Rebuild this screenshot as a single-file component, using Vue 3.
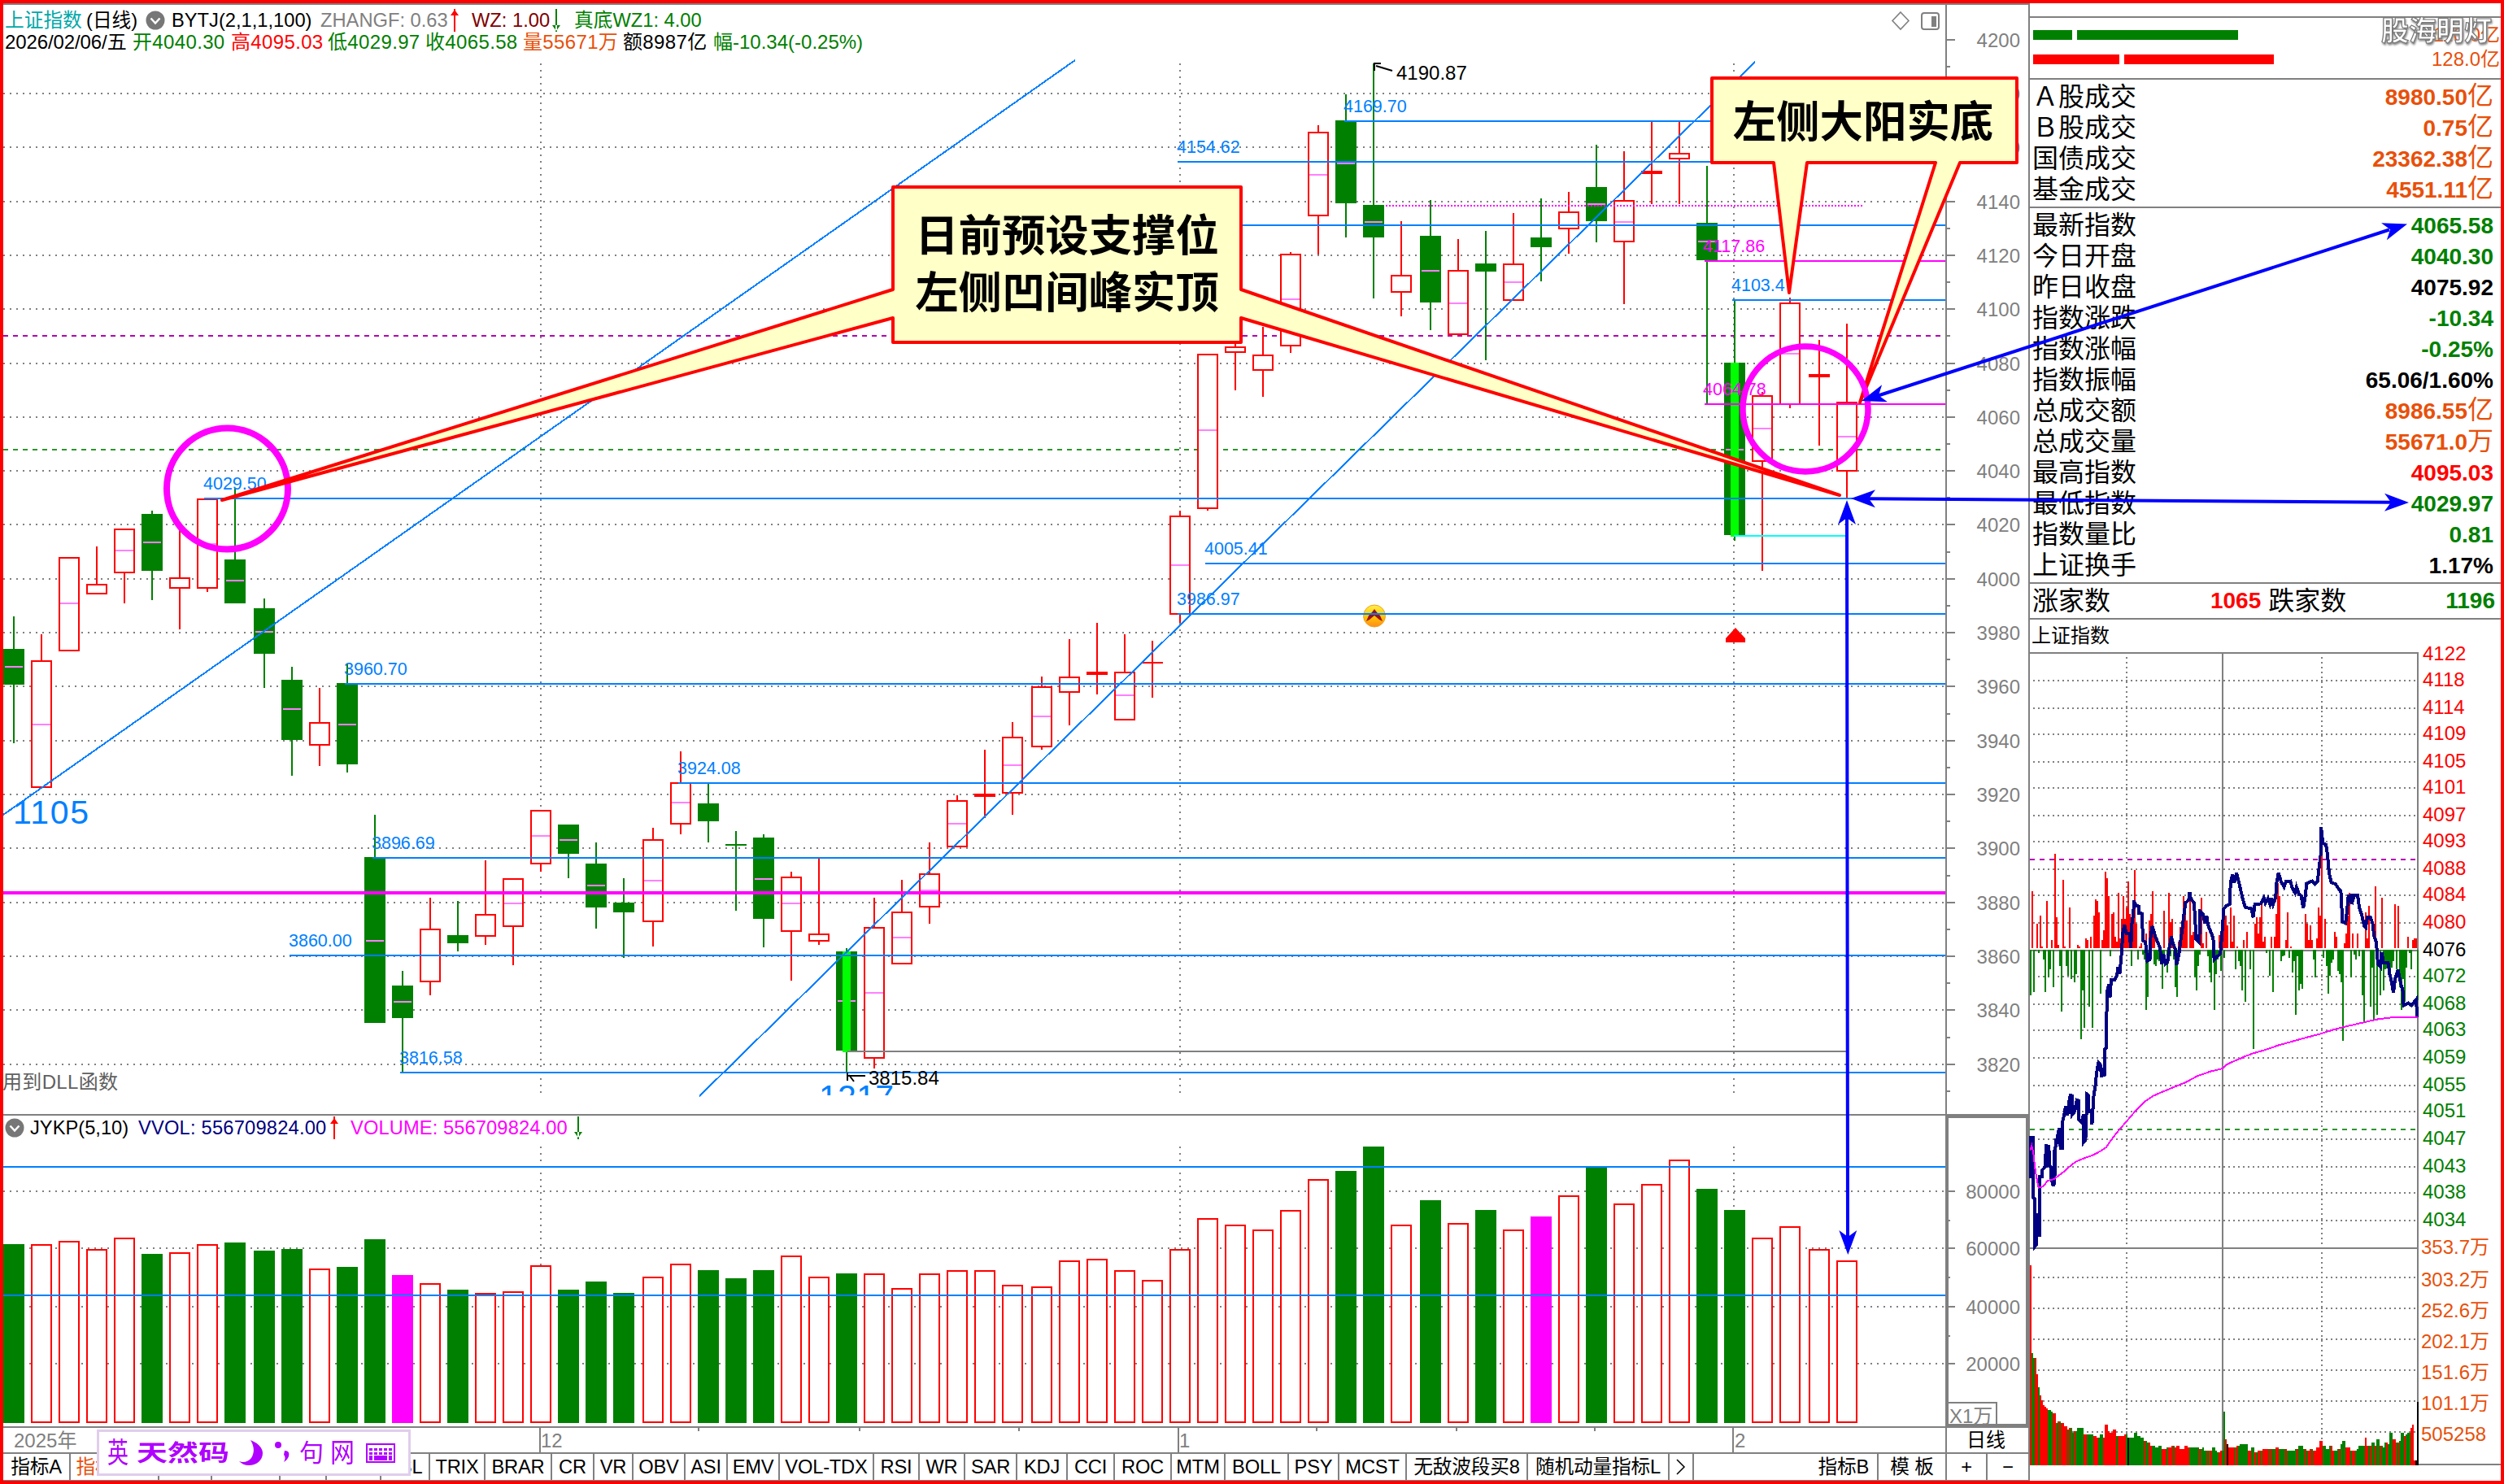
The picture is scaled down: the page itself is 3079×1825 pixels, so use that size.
<script setup>
// x centre of the i-th trading day
const cx = (i) => 17 + 34 * i + 2 * Math.floor((i + 5) / 14)

// [kind, high, bodyTop, bodyBottom, low, midpoint]
const candles = [
  ['g', 758, 798, 842, 914, 820], ['r', 780, 812, 969, 969, 891], ['r', 685, 685, 801, 801, 742],
  ['r', 672, 718, 731, 731], ['r', 650, 650, 705, 742, 677], ['g', 628, 632, 702, 738, 667],
  ['r', 645, 710, 724, 774], ['r', 613, 613, 724, 728, 669], ['g', 600, 688, 742, 742, 714],
  ['g', 736, 748, 804, 846, 777], ['g', 820, 836, 910, 954, 872], ['r', 846, 888, 917, 942],
  ['g', 816, 840, 940, 950, 891], ['g', 1002, 1054, 1258, 1258, 1157], ['g', 1194, 1212, 1252, 1319, 1232],
  ['r', 1104, 1142, 1208, 1224], ['g', 1108, 1150, 1160, 1170], ['r', 1058, 1124, 1152, 1162],
  ['r', 1080, 1080, 1140, 1187, 1111], ['r', 996, 996, 1063, 1072, 1028], ['g', 1014, 1014, 1050, 1080, 1033],
  ['g', 1036, 1062, 1116, 1142, 1089], ['g', 1080, 1110, 1122, 1178], ['r', 1018, 1032, 1134, 1164, 1083],
  ['r', 924, 962, 1014, 1026, 987], ['g', 963, 988, 1010, 1036], ['g', 1022, 1038, 1040, 1120],
  ['g', 1026, 1030, 1130, 1165, 1081], ['r', 1072, 1078, 1146, 1206, 1111], ['r', 1056, 1148, 1158, 1162],
  ['b', 1166, 1170, 1292, 1319, 1231], ['r', 1104, 1140, 1302, 1314, 1221], ['r', 1082, 1121, 1186, 1186, 1153],
  ['r', 1036, 1074, 1116, 1136, 1095], ['r', 978, 984, 1042, 1042, 1013], ['r', 922, 976, 980, 1006],
  ['r', 888, 906, 976, 1002, 941], ['r', 832, 844, 919, 922, 881], ['r', 786, 832, 852, 892],
  ['r', 766, 826, 830, 854], ['r', 780, 826, 886, 886, 855], ['r', 788, 814, 816, 858],
  ['r', 628, 634, 756, 766, 695], ['r', 435, 435, 626, 628, 529], ['r', 400, 426, 434, 480],
  ['r', 402, 436, 456, 488], ['r', 310, 312, 426, 434, 368], ['r', 154, 162, 266, 313, 215],
  ['g', 116, 148, 250, 292, 201], ['g', 78, 252, 292, 367, 273], ['r', 272, 338, 360, 389],
  ['g', 246, 290, 372, 406, 333], ['r', 294, 332, 412, 412, 373], ['g', 284, 324, 334, 443],
  ['r', 262, 324, 370, 370, 347], ['g', 244, 292, 304, 346], ['r', 236, 260, 282, 312],
  ['g', 178, 230, 272, 298, 251], ['r', 186, 246, 298, 374, 273], ['r', 150, 210, 214, 251],
  ['r', 150, 188, 196, 251], ['g', 204, 274, 320, 496, 297], ['b', 368, 446, 658, 665, 553],
  ['r', 482, 486, 568, 702, 527], ['r', 366, 372, 498, 502, 435], ['r', 418, 460, 464, 548],
  ['r', 398, 494, 580, 612, 537]
].map(([kind, high, top, bottom, low, mid], i) => ({ kind, high, top, bottom, low, mid, x: cx(i) }))

const volumes = (
  'g510 r510 r498 r528 r486 g546 r540 r510 g504 g534 g528 r600 g594 g492 m624 r654 g678 r690 r684 r588 ' +
  'g678 g648 g690 r630 r582 g606 g636 g606 r552 r630 g618 r618 r672 r618 r606 r606 r660 r666 r570 r564 ' +
  'r606 r642 r528 r414 r438 r456 r384 r270 g240 g150 r438 g348 r432 g384 r456 m408 r330 g228 r360 r288 ' +
  'r198 g306 g384 r486 r444 r528 r570'
).split(' ').map((s, i) => ({ kind: s[0], top: 1360 + Number(s.slice(1)) / 3, x: cx(i) }))
const kindColor = { g: '#008000', m: '#f0f' }

const priceY = (p) => Math.round(48.6 + (4200 - p) * 3.316)
const priceTicks = Array.from({ length: 20 }, (_, i) => 4200 - i * 20)
const gridTicks = priceTicks.filter((p) => p < 4190)
const volTicks = [[80000, 1465], [60000, 1535], [40000, 1607], [20000, 1677]]
const monthX = [665, 1451, 2132]

// [y, x start, label]
const levels = [
  [149, 1653, '4169.70'], [199, 1448, '4154.62'], [277, 1484, ''], [369, 2130, '4103.4'],
  [613, 251, '4029.50'], [693, 1482, '4005.41'], [755, 1448, '3986.97'], [841, 424, '3960.70'],
  [963, 834, '3924.08'], [1055, 458, '3896.69'], [1175, 356, '3860.00'], [1319, 492, '3816.58']
]

const row1 = [
  ['上证指数', '#00a8a8'], ['(日线)', '#000'], ['@', ''], ['BYTJ(2,1,1,100)', '#000'], ['ZHANGF: 0.63', '#808080'],
  ['↑', ''], ['WZ: 1.00', '#800000'], ['↓', ''], ['真底WZ1: 4.00', '#008000']
]
const row2 = [
  ['2026/02/06/五', '#000'], ['开4040.30', '#008000'], ['高4095.03', '#f00'], ['低4029.97', '#008000'],
  ['收4065.58', '#008000'], ['量55671万', '#e8500a'], ['额8987亿', '#000'], ['幅-10.34(-0.25%)', '#008000']
]

const tabs = [
  ['指标A', 83], ['指标管理', 109, 'hot'], ['窗口', 65], ['MACD', 84], ['DMI', 57], ['DMA', 67], ['FSL', 60],
  ['TRIX', 68], ['BRAR', 82], ['CR', 52], ['VR', 48], ['OBV', 64], ['ASI', 52], ['EMV', 64], ['VOL-TDX', 116],
  ['RSI', 56], ['WR', 56], ['SAR', 64], ['KDJ', 62], ['CCI', 58], ['ROC', 70], ['MTM', 66], ['BOLL', 78],
  ['PSY', 62], ['MCST', 83], ['无敌波段买8', 149], ['随机动量指标L', 174]
]

const turnover = [['Ａ股成交', '8980.50'], ['Ｂ股成交', '0.75'], ['国债成交', '23362.38'], ['基金成交', '4551.11']]
const quotes = [
  ['最新指数', '4065.58', '', 'green'], ['今日开盘', '4040.30', '', 'green'], ['昨日收盘', '4075.92', '', ''],
  ['指数涨跌', '-10.34', '', 'green'], ['指数涨幅', '-0.25%', '', 'green'], ['指数振幅', '65.06/1.60%', '', ''],
  ['总成交额', '8986.55', '亿', 'orange'], ['总成交量', '55671.0', '万', 'orange'], ['最高指数', '4095.03', '', 'red'],
  ['最低指数', '4029.97', '', 'green'], ['指数量比', '0.81', '', 'green'], ['上证换手', '1.17%', '', '']
]

// Intraday chart
const mx = (x) => 2480 + x / 2.6177
const my = (y) => 780 + y / 2.8
const vy = (y) => 1300 + y / 2.9867
const pairs = (s) => s.trim().split(/\s+/).map((p) => p.split(',').map(Number))

const morning = pairs(`45,290 45,445 52,290 52,515 57,520 57,697 63,690 65,575 67,655 74,655 74,440 82,440 82,415 90,405 95,320
 95,405 103,322 105,400 111,405 111,445 117,475 121,340 121,470 125,300 125,330 136,260 136,300 141,335 146,335 146,240 152,215 157,180
 157,210 163,210 168,165 173,135 173,210 179,138 179,210 186,200 193,158 198,160 198,228 208,240 215,210 215,313 221,305 224,205
 224,135 230,140 232,200 240,195 242,247 247,145 252,110 257,55 263,20 268,25 273,73 278,40 283,70 283,0`)
const session = pairs(`283,1430 288,1425 290,1230 297,1205 301,1250 303,1190 315,1190 322,1175 326,1145 331,1170 336,1110 341,1030
 346,1000 352,1030 362,1030 367,1080 370,1000 375,960 377,917 383,935 393,937 393,960 404,962 405,1055 414,1060 420,1125 428,1120
 430,1050 435,1005 440,1020 447,1045 455,1065 461,1080 466,1135 472,1100 478,1135 485,1130 490,1085 497,1040 503,1065 510,1085
 514,1138 522,1100 528,1050 533,1010 538,965 543,925 553,915 556,888 560,910 570,925 573,965 577,1050 587,1060 590,955 600,965
 605,995 611,970 615,1000 624,1025 632,1045 635,1120 645,1110 655,1100 660,1040 666,945 675,935 685,930 688,855 694,828 700,855
 707,822 715,855 720,880 728,915 735,940 755,945 761,975 766,930 785,928 795,908 800,925 808,910 815,930 820,908 825,930 833,905
 836,855 842,822 850,850 860,870 866,852 880,850 887,875 895,890 900,870 908,895 915,900 922,943 928,905 933,858 950,850 960,860
 968,850 972,810 978,760 979,664 985,720 995,725 1000,760 1005,820 1012,855 1025,860 1035,875 1043,885 1048,990 1058,995 1062,960
 1067,902 1075,900 1078,930 1085,900 1097,900 1102,940 1110,965 1118,1005 1123,1010 1128,975 1138,975 1145,995 1150,1040 1157,1060
 1162,1135 1170,1145 1174,1095 1180,1130 1195,1130 1200,1170 1205,1190 1212,1235 1218,1185 1227,1155 1235,1200 1243,1230 1245,1278
 1260,1270 1270,1278 1285,1258 1289,1320`)
const toLine = (a, fy) => a.map(([x, y]) => `${mx(x).toFixed(1)},${fy(y).toFixed(1)}`).join(' ')
const priceLine = toLine(morning, vy) + ' ' + toLine(session, my)

const avgA = pairs(`43,342 48,325 53,350 58,405 64,445 70,480 85,475 98,455 120,448 135,435 155,418 170,402 190,384 215,372 245,360
 270,345 287,332 300,310 320,280 350,240 380,200 410,165 440,142 470,127 510,108 545,92 580,70 625,52 662,42 675,28 700,14 725,3`)
const avgB = pairs(`725,1457 760,1443 800,1431 840,1416 880,1404 930,1389 980,1375 1020,1361 1070,1348 1130,1333 1165,1325 1210,1319 1290,1318`)
const avgLine = toLine(avgA, vy) + ' ' + toLine(avgB, my)

const buys = pairs(`49,885 65,997 75,968 80,1075 96,918 112,1053 123,756 128,974 133,1070 149,846 154,1075 170,941 196,1070 201,1075
 222,1047 227,1053 238,1042 248,970 253,913 259,918 264,958 274,1053 280,1019 285,818 290,840 295,902 306,964 311,958 316,1042
 322,1058 327,890 332,1047 337,980 343,902 348,980 353,941 358,851 363,964 369,1019 374,986 379,812 384,997 395,1075 400,1064
 416,1030 426,986 432,964 437,885 442,1040 474,952 490,890 495,992 500,980 521,1058 526,1008 531,986 536,902 542,918 547,986
 558,918 563,1036 568,1025 594,907 599,1064 610,1025 652,1036 657,1036 663,952 668,950 673,970 678,1002 688,941 694,1058 699,969
 710,1075 731,1053 741,1025 767,997 772,974 777,1030 783,974 788,918 793,1058 798,1042 819,1042 830,1042 835,964 840,857 845,902
 866,1053 871,958 882,1075 929,964 934,997 939,1053 945,1002 950,1053 966,1047 971,941 976,969 981,762 992,980 1023,1025 1028,1042
 1054,1064 1060,1030 1065,969 1070,890 1080,1030 1096,1030 1123,958 1128,1047 1133,935 1154,868 1175,907 1217,930 1227,935
 1258,1042 1274,1053 1280,1047 1285,1047`)
const sells = pairs(`44,1243 54,1232 60,1090 70,1098 86,1120 91,1232 102,1182 107,1154 117,1215 138,1143 144,1299 159,1143 165,1176
 175,1187 185,1198 191,1170 206,1394 212,1226 217,1355 233,1282 243,1355 269,1238 301,1109 369,1142 390,1120 405,1103 411,1120
 416,1294 421,1249 426,1110 432,1115 442,1137 447,1142 453,1120 458,1125 463,1130 468,1221 474,1110 484,1165 495,1109 505,1120
 510,1215 516,1249 573,1182 578,1226 584,1143 589,1103 615,1109 620,1165 625,1198 636,1294 641,1170 646,1120 657,1159 668,1114 704,1154
 715,1126 720,1143 725,1226 736,1266 751,1154 761,1428 803,1098 814,1176 824,1232 850,1126 856,1109 861,1107 876,1114 887,1165
 892,1126 897,1310 903,1110 908,1226 913,1204 918,1221 955,1120 960,1182 986,1114 997,1143 1002,1238 1007,1176 1012,1132
 1018,1120 1033,1159 1039,1170 1044,1198 1049,1400 1075,1182 1086,1103 1091,1120 1102,1109 1112,1243 1117,1333 1138,1282
 1143,1148 1149,1327 1159,1310 1170,1243 1180,1226 1185,1154 1191,1150 1196,1160 1201,1187 1206,1148 1212,1126 1222,1154
 1232,1215 1238,1294 1243,1187 1248,1265 1253,1148 1264,1098 1269,1154 1290,1260`)

const volShape = pairs(`44,765 49,1087 54,1105 59,1105 64,1165 70,1213 75,1242 80,1260 85,1278 91,1284 96,1290 104,1296 112,1302
 120,1308 128,1344 136,1338 146,1344 156,1356 165,1368 172,1362 180,1380 190,1374 200,1362 211,1362 218,1386 242,1386 250,1392
 264,1398 271,1386 278,1398 287,1350 294,1374 302,1380 313,1368 320,1392 335,1392 350,1386 358,1398 370,1398 380,1380 390,1392
 405,1398 410,1410 425,1416 435,1428 450,1434 460,1428 475,1440 490,1434 500,1428 510,1434 520,1428 530,1440 543,1428 555,1434
 580,1434 590,1440 598,1434 605,1446 625,1446 633,1434 640,1446 650,1452 659,1446 665,1302 670,1404 676,1422 682,1434 700,1434
 710,1428 720,1422 738,1422 745,1446 760,1434 770,1452 780,1446 800,1440 830,1440 837,1434 850,1440 890,1446 900,1440 915,1428
 925,1440 940,1446 948,1440 955,1446 968,1434 973,1434 979,1410 985,1428 1000,1440 1010,1428 1020,1446 1040,1440 1046,1422
 1052,1410 1058,1434 1068,1434 1075,1446 1088,1446 1095,1440 1103,1428 1115,1428 1120,1398 1126,1428 1140,1428 1146,1416
 1155,1428 1162,1404 1170,1428 1180,1434 1190,1416 1198,1422 1203,1380 1210,1404 1218,1404 1225,1416 1233,1410 1240,1380
 1248,1392 1256,1386 1261,1380 1267,1362 1272,1350 1278,1482 1283,1482 1288,1266`)
const greenRuns = pairs(`50,57 66,71 98,114 125,129 135,140 162,166 175,182 190,214 224,245 260,265 270,275 320,325 352,356 362,375
 377,390 395,408 412,420 434,466 482,488 503,507 554,585 590,604 606,612 620,624 628,640 645,650 661,669 700,705 710,742 752,763
 768,775 785,790 812,816 822,830 845,850 853,863 868,893 896,900 907,925 933,938 950,954 985,1010 1020,1033 1045,1058 1072,1076
 1090,1120 1132,1137 1143,1150 1158,1167 1174,1185 1194,1209 1222,1226 1230,1246 1254,1268`)
const minuteBars = Array.from({ length: 239 }, (_, i) => {
  const x = 44 + i * 5.236
  let best = volShape[0]
  for (const p of volShape) if (Math.abs(p[0] - x) < Math.abs(best[0] - x)) best = p
  const black = Math.abs(x - 358) < 2.6 || Math.abs(x - 678) < 2.6 || x > 1284
  const green = greenRuns.some(([a, b]) => x >= a - 1 && x <= b + 1)
  return { x: 2496 + i * 2, top: Math.round(vy(best[1])), fill: black ? '#000' : green ? '#008000' : '#f00' }
})

const miniGrid = [837, 871, 903, 937, 969, 1003, 1035, 1069, 1101, 1135, 1201, 1235, 1267, 1301, 1335, 1367, 1401, 1435, 1467, 1501,
  1571, 1609, 1647, 1685, 1723, 1761]
const miniLabels = [
  [4122, 803], [4118, 835], [4114, 869], [4109, 901], [4105, 935], [4101, 967], [4097, 1001], [4093, 1033], [4088, 1067],
  [4084, 1099], [4080, 1133], [4076, 1167], [4072, 1199], [4068, 1233], [4063, 1265], [4059, 1299], [4055, 1333], [4051, 1365],
  [4047, 1399], [4043, 1433], [4038, 1465], [4034, 1499]
]
const miniVolLabels = [['353.7万', 1533], ['303.2万', 1573], ['252.6万', 1611], ['202.1万', 1649], ['151.6万', 1687], ['101.1万', 1725], ['505258', 1763]]

// Blue arrow heads: tip x, tip y, rotation
const heads = [
  [2960, 275.5, -18], [2289, 493, 162], [2276, 613, 180.4], [2962, 618, 0.4], [2271, 615, -90], [2272.3, 1543, 90]
]
</script>

<template>
  <div class="terminal">
    <main class="left">
      <section class="pane price">
        <div class="plot">
          <header class="head">
            <div class="info row1">
              <span v-for="(c, i) in row1" :key="i" :style="{ color: c[1] }">
                <svg v-if="c[0] === '@'" class="chev" viewBox="0 0 24 24"><circle cx="12" cy="12" r="11.5" fill="#777" /><path d="M6.5 9.5 12 15.500 17.500 9.500" fill="none" stroke="#fff" stroke-width="2.500" /></svg>
                <svg v-else-if="c[0] === '↑'" class="arr" viewBox="0 0 10 28"><path d="M4 0h2v28H4zM5 1l5 7H0z" fill="#f00" /></svg>
                <svg v-else-if="c[0] === '↓'" class="arr" viewBox="0 0 10 28"><path d="M4 0h2v28H4zM5 27l5-7H0z" fill="#008000" /></svg>
                <template v-else>{{ c[0] }}</template>
              </span>
              <svg class="tools" viewBox="0 0 50 24">
                <path d="M13 2 23 12.500 13 23 3 12.500z" fill="none" stroke="#808080" stroke-width="1.600" />
                <rect x="39" y="3" width="21" height="20" rx="3" fill="none" stroke="#808080" stroke-width="2" />
                <rect x="51" y="7" width="6" height="13" fill="#808080" />
              </svg>
            </div>
            <div class="info row2">
              <span v-for="(c, i) in row2" :key="i" :style="{ color: c[1] }">{{ c[0] }}</span>
            </div>
          </header>
          <svg class="chart" width="2388" height="1303" viewBox="4 67 2388 1303">
            <g shape-rendering="crispEdges">
              <g stroke="#808080" stroke-width="2" stroke-dasharray="2 6">
                <line v-for="p in gridTicks" :key="p" x1="4" x2="2390" :y1="priceY(p)" :y2="priceY(p)" />
                <line v-for="x in monthX" :key="x" :x1="x" :x2="x" y1="78" y2="1346" />
              </g>
              <line x1="4" x2="2388" y1="413" y2="413" stroke="#b400b4" stroke-width="2" stroke-dasharray="6 6" />
              <line x1="4" x2="2388" y1="553" y2="553" stroke="#2e952e" stroke-width="2" stroke-dasharray="6 6" />
              <g v-for="(c, i) in candles" :key="i">
                <line :x1="c.x" :x2="c.x" :y1="c.high" :y2="c.low" :stroke="c.kind === 'r' ? '#f00' : '#008000'" stroke-width="2" />
                <rect v-if="c.kind === 'r' && c.bottom - c.top > 5" :x="c.x - 12" :y="c.top + 1" width="24" :height="c.bottom - c.top - 2" fill="#fff" stroke="#f00" stroke-width="2" />
                <rect v-else :x="c.x - 13" :y="c.top" width="26" :height="c.bottom - c.top" :fill="c.kind === 'r' ? '#f00' : '#008000'" />
                <line v-if="c.mid" :x1="c.x - 11" :x2="c.x + 11" :y1="c.mid" :y2="c.mid" stroke="#ff80ff" stroke-width="2" />
                <rect v-if="c.kind === 'b'" :x="c.x - 5" :y="c.top" width="10" :height="c.bottom - c.top + 2" fill="#0f0" />
              </g>
            </g>
            <defs>
              <linearGradient id="face" x1="0" y1="0" x2="0" y2="1">
                <stop offset="0" stop-color="#fff04a" /><stop offset="0.55" stop-color="#ffc400" /><stop offset="1" stop-color="#ff8a1e" />
              </linearGradient>
            </defs>
            <circle cx="1690" cy="757.500" r="13.500" fill="url(#face)" stroke="#f0a020" stroke-width="1" />
            <path d="M1680 764l3-7 4-4 3-4 3 4 4 4 3 7-4-2-6-5-6 5z" fill="#a01010" />
            <path d="M2134 772l12 13v5h-24v-5z" fill="#f00" />
            <g shape-rendering="crispEdges" stroke-width="2">
              <line v-for="l in levels" :key="l[0]" :x1="l[1]" x2="2392" :y1="l[0]" :y2="l[0]" stroke="#0080ff" />
              <line x1="2096" x2="2392" y1="321" y2="321" stroke="#f0f" />
              <line x1="2096" x2="2392" y1="497" y2="497" stroke="#f0f" />
              <line x1="1704" x2="2290" y1="253" y2="253" stroke="#f0f" stroke-dasharray="2 2" />
              <line x1="4" x2="2392" y1="1098" y2="1098" stroke="#f0f" stroke-width="4" />
              <line x1="1042" x2="2271" y1="1293" y2="1293" stroke="#808080" />
              <line x1="2132" x2="2269" y1="659" y2="659" stroke="#0ff" />
              <line x1="4" y1="1002" x2="1322" y2="74" stroke="#0080ff" />
              <line x1="860" y1="1348" x2="2158" y2="76" stroke="#0080ff" />
            </g>
            <g class="lvl" fill="#0080ff">
              <text v-for="l in levels" :key="l[0]" :x="l[1] - 1" :y="l[0] - 11.5">{{ l[2] }}</text>
              <text x="2094" y="309.500" fill="#f0f">4117.86</text>
              <text x="2094" y="485.500" fill="#f0f">4064.78</text>
            </g>
            <g class="txt">
              <text x="1717" y="98">4190.87</text>
              <text x="1068" y="1334">3815.84</text>
              <text x="3" y="1339" fill="#606060" textLength="142">用到DLL函数</text>
            </g>
            <path d="M1690 87v-9h8M1692 81l20 6M1042 1323h22M1042 1319v10M1044 1322l6 8" fill="none" stroke="#000" stroke-width="2" />
            <text class="big" x="16" y="1013" textLength="93">1105</text>
            <svg x="1000" y="1320" width="110" height="27"><text class="big" x="7" y="43" textLength="92">1217</text></svg>
          </svg>
        </div>
        <svg class="axis" width="102" height="1364" viewBox="2392 6 102 1364">
          <g stroke="#808080" stroke-width="2" shape-rendering="crispEdges">
            <line x1="2393" x2="2393" y1="6" y2="1370" />
            <template v-for="p in priceTicks" :key="p">
              <line x1="2392" x2="2404" :y1="priceY(p)" :y2="priceY(p)" />
              <line x1="2392" x2="2398" :y1="priceY(p - 10)" :y2="priceY(p - 10)" />
            </template>
          </g>
          <g class="txt" fill="#808080" text-anchor="end"><text v-for="p in priceTicks" :key="p" x="2484" :y="priceY(p) + 8.5">{{ p }}</text></g>
        </svg>
      </section>

      <section class="pane volume">
        <div class="plot">
          <div class="info row3">
            <span><svg class="chev" viewBox="0 0 24 24"><circle cx="12" cy="12" r="11.5" fill="#777" /><path d="M6.500 9.500 12 15.500 17.500 9.500" fill="none" stroke="#fff" stroke-width="2.500" /></svg></span>
            <span>JYKP(5,10)</span>
            <span class="navy">VVOL: 556709824.00</span>
            <span><svg class="arr" viewBox="0 0 10 28"><path d="M4 0h2v28H4zM5 2l5 7H0z" fill="#f00" /></svg></span>
            <span class="pink">VOLUME: 556709824.00</span>
            <span><svg class="arr" viewBox="0 0 10 28"><path d="M4 0h2v28H4zM5 26l5-7H0z" fill="#008000" /></svg></span>
          </div>
          <svg class="chart" width="2388" height="352" viewBox="4 1402 2388 352" shape-rendering="crispEdges">
            <g stroke="#808080" stroke-width="2" stroke-dasharray="2 6">
              <line v-for="t in volTicks" :key="t[0]" x1="4" x2="2390" :y1="t[1]" :y2="t[1]" />
              <line v-for="x in monthX" :key="x" :x1="x" :x2="x" y1="1410" y2="1750" />
            </g>
            <template v-for="(v, i) in volumes" :key="i">
              <rect v-if="v.kind === 'r'" :x="v.x - 12" :y="v.top + 1" width="24" :height="1748 - v.top" fill="#fff" stroke="#f00" stroke-width="2" />
              <rect v-else :x="v.x - 13" :y="v.top" width="26" :height="1750 - v.top" :fill="kindColor[v.kind]" />
            </template>
            <path d="M4 1435H2392M4 1593H2392" stroke="#0080ff" stroke-width="2" />
          </svg>
        </div>
        <svg class="axis" width="102" height="382" viewBox="2392 1372 102 382">
          <g fill="none" stroke="#808080" stroke-width="2" shape-rendering="crispEdges">
            <rect x="2394" y="1372.500" width="99" height="380.500" stroke-width="4" />
            <line v-for="t in volTicks" :key="t[0]" x1="2394" x2="2404" :y1="t[1]" :y2="t[1]" />
            <path d="M2394 1501h4M2394 1571h4M2394 1643h4M2394 1725h61v29" />
          </g>
          <g class="txt" fill="#808080"><text v-for="t in volTicks" :key="t[0]" x="2484" :y="t[1] + 8.5" text-anchor="end">{{ t[0] }}</text>
            <text x="2397" y="1750">X1万</text></g>
        </svg>
      </section>

      <section class="dates">
        <svg width="2388" height="30" viewBox="4 1756 2388 30">
          <path d="M664 1756v30M1449 1756v30M2131 1756v30M859 1756v4M1057 1756v4M1253 1756v4M1619 1756v4M1791 1756v4M1961 1756v4" stroke="#808080" stroke-width="2" shape-rendering="crispEdges" />
          <g class="txt" fill="#808080"><text x="17" y="1780">2025年</text><text x="665" y="1780">12</text><text x="1450" y="1780">1</text><text x="2133" y="1780">2</text></g>
        </svg>
        <div class="period">日线</div>
      </section>

      <nav class="tabs">
        <span v-for="(t, i) in tabs" :key="i" class="tab" :class="t[2]" :style="{ width: t[1] + 'px' }">{{ t[0] }}</span>
        <span class="tab next"><svg width="12" height="20" viewBox="0 0 12 20"><path d="M1 1 10 10 1 19" fill="none" stroke="#000" stroke-width="1.500" /></svg></span>
        <span class="tab grow">指标B</span>
        <span class="tab tpl">模 板</span>
        <span class="tab zoom">+</span>
        <span class="tab zoom last">−</span>
      </nav>
    </main>

    <aside class="right">
      <div class="clip"><span>分时走势</span></div>
      <div class="flows">
        <div class="flow"><i class="fg" style="width: 48px"></i><i class="fg" style="width: 198px"></i><em>110.0亿</em></div>
        <div class="flow"><i class="fr" style="width: 106px"></i><i class="fr" style="width: 184px"></i><em>128.0亿</em></div>
      </div>
      <div class="block">
        <div v-for="t in turnover" :key="t[0]" class="line"><span>{{ t[0] }}</span><span class="val orange"><b>{{ t[1] }}</b>亿</span></div>
      </div>
      <div class="block">
        <div v-for="q in quotes" :key="q[0]" class="line"><span>{{ q[0] }}</span><span class="val" :class="q[3]"><b>{{ q[1] }}</b>{{ q[2] }}</span></div>
      </div>
      <div class="line counts">
        <span>涨家数</span><b class="red">1065</b><span>跌家数</span><b class="green">1196</b>
      </div>
      <div class="title">上证指数</div>
      <svg class="mini" width="580" height="1018" viewBox="2495 802 580 1018">
        <g shape-rendering="crispEdges">
          <g stroke="#808080" stroke-width="2">
            <g stroke-dasharray="2 4">
              <line v-for="y in miniGrid" :key="y" x1="2500" x2="2972" :y1="y" :y2="y" />
              <path d="M2615 808V1532M2855 808V1532M2615 1540V1800M2855 1540V1800" />
            </g>
            <path d="M2495 803H2973V1801M2733 803V1801M2495 1535H2973M2495 1801H3075M2495 1169H2973" fill="none" />
          </g>
          <line x1="2496" x2="2972" y1="1057" y2="1057" stroke="#b400b4" stroke-width="2" stroke-dasharray="6 6" />
          <line x1="2496" x2="2972" y1="1389" y2="1389" stroke="#2e952e" stroke-width="2" stroke-dasharray="6 6" />
          <rect v-for="b in sells" :key="b[0]" :x="Math.round(mx(b[0])) - 1" y="1168" width="2" :height="my(b[1]) - 1168" fill="#008000" />
          <rect v-for="b in buys" :key="b[0]" :x="Math.round(mx(b[0])) - 1" :y="my(b[1])" width="2" :height="1166 - my(b[1])" fill="#f00" />
          <polyline :points="priceLine" fill="none" stroke="#000080" stroke-width="4" />
          <rect x="2854" y="1053" width="2" height="113" fill="#f00" />
          <polyline :points="avgLine" fill="none" stroke="#f0f" stroke-width="2" />
          <rect v-for="b in minuteBars" :key="b.x" :x="b.x" :y="b.top" width="2" :height="1802 - b.top" :fill="b.fill" />
        </g>
        <g class="txt">
          <text v-for="l in miniLabels" :key="l[0]" x="2979" :y="l[1] + 9" :fill="l[0] > 4076 ? '#f00' : l[0] < 4076 ? '#008000' : '#000'">{{ l[0] }}</text>
          <text v-for="l in miniVolLabels" :key="l[0]" x="2977" :y="l[1] + 9" fill="#e8500a">{{ l[0] }}</text>
        </g>
      </svg>
    </aside>

    <svg class="notes" width="3079" height="1825" viewBox="0 0 3079 1825">
      <circle cx="279.500" cy="601" r="74.500" fill="none" stroke="#f0f" stroke-width="8" />
      <g fill="#ffffc8" stroke="#f00" stroke-width="4" stroke-linejoin="round">
        <path d="M1098 230H1526V356L2262 609 1526 391V421H1098V391L273 615 1098 356z" />
        <path d="M2105 96H2480V200H2410L2287 495 2380 200H2222L2200 360 2181 200H2105z" />
      </g>
      <g class="call" text-anchor="middle">
        <text x="1312" y="309">日前预设支撑位</text>
        <text x="1312" y="379">左侧凹间峰实顶</text>
        <text x="2291" y="169">左侧大阳实底</text>
      </g>
      <circle cx="2220" cy="503" r="77" fill="none" stroke="#f0f" stroke-width="7.500" />
      <path d="M2308 487 2938 282.500M2296 613.200 2942 617.800M2271 636 2272 1522" stroke="#00f" stroke-width="4" />
      <path v-for="(h, i) in heads" :key="i" d="M0 0-30-11-22 0-30 11z" fill="#00f" :transform="`translate(${h[0]} ${h[1]}) rotate(${h[2]})`" />
      <text class="mark" x="2928" y="50">股海明灯</text>
    </svg>

    <div class="ime">
      <span class="en">英</span><span class="zr">天然码</span>
      <svg width="30" height="32" viewBox="0 0 30 32"><path d="M14 0c10 4 15 10 15 16 0 9-8 15-17 15C7 31 3 29 0 26c5 2 11 1 15-4 4-6 4-14-1-22z" fill="#b000ff" /></svg>
      <svg width="20" height="32" viewBox="0 0 20 32"><circle cx="4" cy="6" r="4" fill="#b000ff" /><path d="M12 13c5 0 6 3 5 7-1 3-3 5-6 7 2-4 2-6 0-9z" fill="#b000ff" /></svg>
      <span class="ju">句</span><span class="wang">网</span>
      <svg width="36" height="24" viewBox="0 0 36 24" shape-rendering="crispEdges"><rect x="1" y="1" width="34" height="22" fill="none" stroke="#b000ff" stroke-width="2" /><path d="M4 7h28M4 12h28" stroke="#b000ff" stroke-width="3" stroke-dasharray="4 2" /><path d="M4 18h4M10 18h16M28 18h4" stroke="#b000ff" stroke-width="6" /></svg>
    </div>
  </div>
</template>

<style scoped>
.terminal {
  position: relative;
  box-sizing: border-box;
  width: 3079px;
  height: 1825px;
  border: 4px solid #f00;
  background: #fff;
  display: flex;
  overflow: hidden;
  color: #000;
  font: 24px/28px "Liberation Sans", "Noto Sans CJK SC", sans-serif;
}
svg { display: block; flex: none; }
.left { width: 2490px; flex: none; box-sizing: border-box; border-top: 2px solid #808080; border-bottom: 1px solid #808080; display: flex; flex-direction: column; }
.pane { display: flex; }
.price { height: 1364px; border-bottom: 2px solid #808080; }
.volume { height: 382px; border-bottom: 2px solid #808080; }
.plot { width: 2388px; flex: none; }
.head { height: 61px; padding-top: 5px; box-sizing: border-box; }
.info { display: grid; height: 28px; align-items: center; white-space: nowrap; padding-left: 2px; }
.info span { display: block; line-height: 28px; }
.row1 { grid-template-columns: 100px 73px 32px 183px 161px 25px 100px 26px 1649px auto; font-size: 23.7px; }
.row2 { grid-template-columns: 157px 121px 119px 120px 120px 123px 111px 220px; letter-spacing: 0.35px; margin-top: -1px; }
.row2 span:first-child { letter-spacing: -0.1px; }
.row2 span:last-child { letter-spacing: 0; }
.row3 { grid-template-columns: 31px 133px 236px 25px 275px 20px; height: 30px; font-size: 23.7px; }
.row3 .navy { color: #000080; letter-spacing: 0.2px; }
.row3 .pink { color: #f0f; letter-spacing: 0.1px; }
.chev { width: 24px; height: 24px; }
.arr { width: 10px; height: 28px; }
.row1 .arr { margin-left: -1px; }
.tools { width: 50px; height: 24px; overflow: visible; margin-left: -31px; }
.txt { font-size: 24px; }
.lvl { font-size: 21.5px; }
.big { font-size: 41px; fill: #0080ff; }
.dates { display: flex; height: 30px; border-bottom: 2px solid #808080; }
.period { flex: 1; border-left: 2px solid #808080; text-align: center; line-height: 29px; padding-right: 4px; }
.tabs { display: flex; height: 32px; font-size: 23.7px; }
.tab { box-sizing: border-box; flex: none; border-right: 2px solid #808080; text-align: center; line-height: 32px; white-space: nowrap; overflow: hidden; letter-spacing: -0.2px; }
.hot { color: #e8500a; }
.next { width: 30px; display: flex; align-items: center; justify-content: center; }
.grow { flex: 1; text-align: right; padding-right: 10px; }
.tpl { width: 84px; }
.zoom { width: 50px; }
.last { border-right: 0; }
.right { flex: 1; min-width: 0; border-left: 2px solid #808080; display: flex; flex-direction: column; font-size: 32px; }
.clip { height: 16px; border-bottom: 2px solid #808080; overflow: hidden; flex: none; }
.clip span { display: block; margin: -25px 0 0 240px; font-size: 15px; line-height: 28px; color: #00a8a8; }
.flows { height: 74px; border-bottom: 2px solid #808080; flex: none; }
.flow { display: flex; align-items: center; height: 30px; padding-left: 4px; gap: 6px; }
.flow:first-child { padding-top: 6px; }
.flow i { height: 12px; }
.fg { background: #008000; }
.fr { background: #f00; }
.flow em { margin-left: auto; padding-right: 1px; font-style: normal; font-size: 24px; color: #e8500a; }
.block { padding: 2px 9px 2px 3px; border-bottom: 2px solid #808080; }
.line { display: flex; justify-content: space-between; align-items: center; height: 38px; line-height: 38px; white-space: nowrap; }
.line b { font-size: 28px; }
.orange { color: #e8500a; }
.green { color: #008000; }
.red { color: #f00; }
.counts { height: 42px; padding: 0 7px 0 3px; border-bottom: 2px solid #808080; justify-content: flex-start; }
.counts .red { margin-left: auto; margin-right: 9px; }
.counts .green { margin-left: 122px; }
.title { height: 40px; line-height: 40px; font-size: 24px; padding-left: 2px; }
.mini { overflow: visible; margin-left: -1px; }
.notes { position: absolute; left: -4px; top: -4px; }
.call { font-size: 53.4px; font-weight: 700; }
.mark { font-size: 34px; font-weight: 700; fill: #fff; stroke: #777; stroke-width: 1.2px; filter: drop-shadow(1px 2px 1px #888); }
.ime { position: absolute; left: 115px; top: 1754px; width: 386px; height: 57px; box-sizing: border-box; border: 3px solid #e0cdec; background: #fff; display: flex; align-items: center; color: #b000ff; padding-left: 10px; font-weight: 700; }
.en { font-size: 26px; transform: scaleY(1.35); margin-right: 10px; font-weight: 400; }
.zr { font-size: 38px; margin-right: 12px; transform: scaleY(0.75); }
.ime svg + svg { margin-left: 14px; }
.ju { font-size: 30px; margin-left: 10px; font-weight: 400; }
.wang { font-size: 30px; margin: 0 14px 0 8px; font-weight: 400; transform: scaleY(1.1); }
</style>

<style>
body { background: #fff; }
</style>
